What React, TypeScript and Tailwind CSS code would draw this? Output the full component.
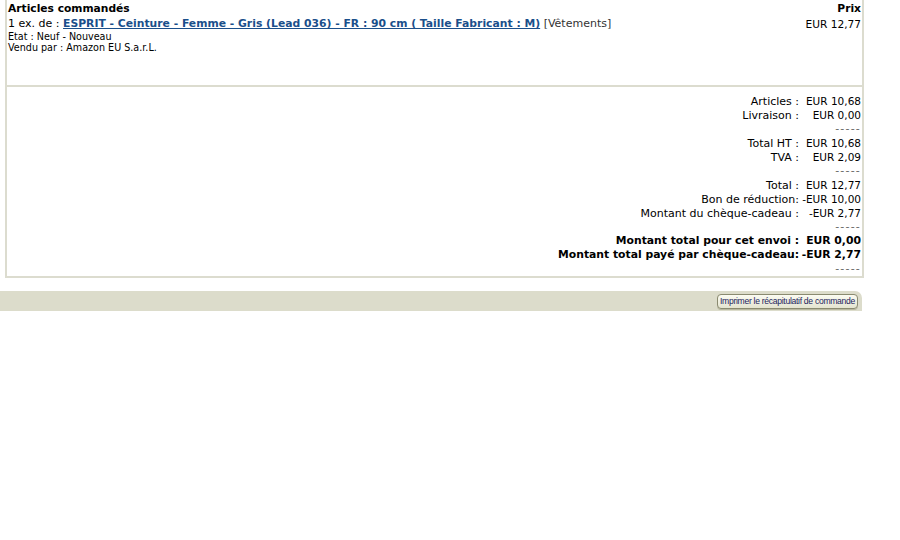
import React from "react";

const rows: { label: string; value: string; bold?: boolean; dash?: boolean }[] = [
  { label: "Articles :", value: "EUR 10,68" },
  { label: "Livraison :", value: "EUR 0,00" },
  { label: "", value: "-----", dash: true },
  { label: "Total HT :", value: "EUR 10,68" },
  { label: "TVA :", value: "EUR 2,09" },
  { label: "", value: "-----", dash: true },
  { label: "Total :", value: "EUR 12,77" },
  { label: "Bon de réduction:", value: "-EUR 10,00" },
  { label: "Montant du chèque-cadeau :", value: "-EUR 2,77" },
  { label: "", value: "-----", dash: true },
  { label: "Montant total pour cet envoi :", value: "EUR 0,00", bold: true },
  { label: "Montant total payé par chèque-cadeau:", value: "-EUR 2,77", bold: true },
  { label: "", value: "-----", dash: true },
];

export default function App() {
  return (
    <div
      className="w-[900px] h-[540px] bg-white text-black"
      style={{ fontFamily: '"DejaVu Sans", Verdana, sans-serif' }}
    >
      <div className="w-[864px]">
        <div className="ml-[5px] border-l-2 border-r-2 border-b-2 border-[#dcdccf]">
          {/* Articles section */}
          <div className="h-[87px] flex pl-[1px] pr-[1px] border-b-2 border-[#dcdccf]">
            <div className="flex-1">
              <div className="text-[10.7px] font-bold leading-[16px] pt-[1px]">Articles commandés</div>
              <div className="text-[11px] leading-[14px]">
                1 ex. de :{" "}
                <a className="text-[10.8px] font-bold text-[#1a4f8b] underline" href="#">
                  ESPRIT - Ceinture - Femme - Gris (Lead 036) - FR : 90 cm ( Taille Fabricant : M)
                </a>{" "}
                <span className="text-[#333]">[Vêtements]</span>
              </div>
              <div className="text-[9.6px] leading-[11px]">Etat : Neuf - Nouveau</div>
              <div className="text-[9.6px] leading-[11px]">Vendu par : Amazon EU S.a.r.L.</div>
            </div>
            <div className="text-right">
              <div className="text-[10.7px] font-bold leading-[16px] pt-[1px]">Prix</div>
              <div className="text-[10.6px] leading-[14px]">EUR 12,77</div>
            </div>
          </div>
          {/* Totals */}
          <div className="pt-[7px] pb-0 pr-[1px] flex flex-col">
            {rows.map((r, i) => (
              <div
                key={i}
                className={
                  "flex justify-end items-baseline h-[14px] leading-[14px] " +
                  (r.bold ? "font-bold text-[10.8px]" : "text-[11px]")
                }
              >
                <div className="text-right pr-[1px]">{r.label}</div>
                <div
                  className={
                    "w-[61px] text-right " +
                    (r.dash ? "text-[#666] tracking-[1.2px]" : r.bold ? "" : "text-[10.5px]")
                  }
                >
                  {r.value}
                </div>
              </div>
            ))}
          </div>
        </div>
        {/* Bottom bar */}
        <div className="mt-[13px] h-[20px] w-[862px] bg-[#dcdccb] rounded-tr-[7px] flex items-center justify-end pr-[4px]">
          <button
            className="h-[15px] w-[141px] rounded-[4px] border border-[#8a8a70] bg-gradient-to-b from-[#fbfbf2] to-[#e4e4d0] text-[#1d1d5c] text-[8.6px] leading-[13px] tracking-[-0.3px] shadow-[0_1px_0_#b8b8a0]"
            style={{ fontFamily: '"Liberation Sans Narrow", "Liberation Sans", Arial, sans-serif' }}
          >
            Imprimer le récapitulatif de commande
          </button>
        </div>
      </div>
    </div>
  );
}
